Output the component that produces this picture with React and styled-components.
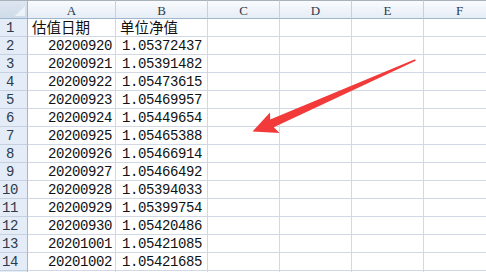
import React from "react";
import styled, { createGlobalStyle } from "styled-components";

const GlobalStyle = createGlobalStyle`
  html, body {
    margin: 0;
    padding: 0;
    background: #fff;
    overflow: hidden;
  }
`;

const columns = ["A", "B", "C", "D", "E", "F"];

const rows = [
  ["20200920", "1.05372437"],
  ["20200921", "1.05391482"],
  ["20200922", "1.05473615"],
  ["20200923", "1.05469957"],
  ["20200924", "1.05449654"],
  ["20200925", "1.05465388"],
  ["20200926", "1.05466914"],
  ["20200927", "1.05466492"],
  ["20200928", "1.05394033"],
  ["20200929", "1.05399754"],
  ["20200930", "1.05420486"],
  ["20201001", "1.05421085"],
  ["20201002", "1.05421685"],
];

function EmptyCells() {
  return (
    <>
      <Cell />
      <Cell />
      <Cell />
      <Cell />
    </>
  );
}

function App() {
  return (
    <>
      <GlobalStyle />
      <Wrapper>
        <Sheet>
          <Corner />
          {columns.map((c) => (
            <ColHead key={c}>{c}</ColHead>
          ))}

          <RowHead>1</RowHead>
          <Cell cjk>估值日期</Cell>
          <Cell cjk>单位净值</Cell>
          <EmptyCells />

          {rows.map((r, i) => (
            <React.Fragment key={r[0]}>
              <RowHead>{i + 2}</RowHead>
              <Cell align="right">{r[0]}</Cell>
              <Cell>{r[1]}</Cell>
              <EmptyCells />
            </React.Fragment>
          ))}

          <RowHead />
          <Cell />
          <Cell />
          <EmptyCells />
        </Sheet>
        <Arrow viewBox="0 0 486 272" width="486" height="272">
          <polygon
            points="252.5,131.5 270,112.5 270.2,119.5 415,59.2 415.8,60.7 273.8,127.2 279.5,133"
            fill="#f23a3a"
          />
        </Arrow>
      </Wrapper>
    </>
  );
}

export default App;

const Wrapper = styled.div`
  position: relative;
  width: 486px;
  height: 272px;
  overflow: hidden;
`;

const Sheet = styled.div`
  display: grid;
  grid-template-columns: 28px 88px 92px 72px 72px 72px 72px;
  grid-template-rows: 19px;
  grid-auto-rows: 18px;
  width: 496px;
`;

const Corner = styled.div`
  position: relative;
  box-sizing: border-box;
  border-top: 1px solid #a9b1bb;
  border-right: 1px solid #9eb6ce;
  border-bottom: 1px solid #9eb6ce;
  background: linear-gradient(#dde6f1, #cfdbe9);

  &::after {
    content: "";
    position: absolute;
    right: 2px;
    bottom: 2px;
    border-left: 10px solid transparent;
    border-bottom: 10px solid #eef3f9;
  }
`;

const ColHead = styled.div`
  box-sizing: border-box;
  border-top: 1px solid #a9b1bb;
  border-right: 1px solid #c5d1de;
  border-bottom: 1px solid #9eb6ce;
  background: linear-gradient(#f9fbfd, #e6edf6);
  display: flex;
  align-items: center;
  justify-content: center;
  font-family: "Liberation Serif", serif;
  font-size: 13px;
  line-height: 1;
  color: #2c3a4c;
  padding-top: 1px;
`;

const RowHead = styled.div`
  box-sizing: border-box;
  border-right: 1px solid #9eb6ce;
  border-bottom: 1px solid #c5d1de;
  background: #e4ecf7;
  display: flex;
  align-items: center;
  justify-content: center;
  padding-right: 7px;
  font-family: "Liberation Mono", monospace;
  font-size: 14px;
  line-height: 1;
  letter-spacing: -0.4px;
  color: #2c3a4c;
`;

const Cell = styled.div`
  box-sizing: border-box;
  border-right: 1px solid #d0d7e5;
  border-bottom: 1px solid #d0d7e5;
  display: flex;
  align-items: center;
  justify-content: ${(p) => (p.align === "right" ? "flex-end" : "flex-start")};
  padding: 0 3px 0 ${(p) => (p.cjk ? "4px" : "6px")};
  white-space: nowrap;
  line-height: 1;
  color: #111;
  font-family: ${(p) =>
    p.cjk
      ? `"Noto Sans CJK SC", sans-serif`
      : `"Liberation Mono", monospace`};
  font-size: ${(p) => (p.cjk ? "14.5px" : "14px")};
  letter-spacing: ${(p) => (p.cjk ? "0" : "-0.4px")};
`;

const Arrow = styled.svg`
  position: absolute;
  left: 0;
  top: 0;
  pointer-events: none;
`;
